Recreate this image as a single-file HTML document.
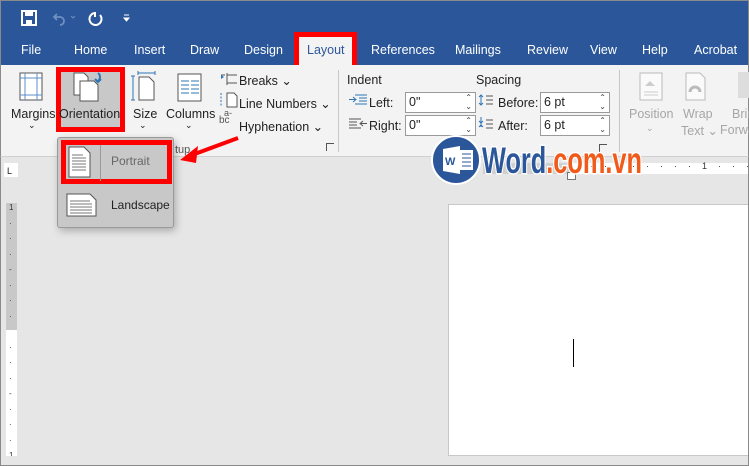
<!DOCTYPE html>
<html><head><meta charset="utf-8"><style>
*{margin:0;padding:0;box-sizing:border-box}
body{width:749px;height:466px;overflow:hidden;position:relative;background:#e6e6e6;font-family:"Liberation Sans",sans-serif;font-size:12px;color:#222}
.a{position:absolute}
.tab{position:absolute;top:43px;color:#fff;font-size:12.5px}
.rb{position:absolute;font-size:12.5px;color:#222}
.gr{color:#a6a6a6}
.inp{position:absolute;width:70px;height:21px;border:1px solid #9a9a9a;background:#fff;font-size:12.5px;padding:2px 3px}
.inp span{position:absolute;right:3px;top:0;font-size:8px;line-height:9px;color:#444}
</style></head><body>
<div class="a" style="left:0;top:0;width:749px;height:65px;background:#2b579a;border:1px solid #8a8a8a;border-bottom:none"></div>
<!-- QAT -->
<svg class="a" style="left:20px;top:9px" width="120" height="18">
<rect x="2" y="2" width="14" height="14" fill="none" stroke="#fff" stroke-width="2"/><rect x="5" y="2" width="8" height="5" fill="#fff"/><rect x="6" y="11" width="6" height="5" fill="#fff"/>
<path d="M37 5 l-3 3 3 3 M34 8 h6 a4 4 0 0 1 0 8" fill="none" stroke="#6f8fc0" stroke-width="1.8"/>
<path d="M51 7 l2 2 2-2" fill="none" stroke="#6f8fc0"/>
<path d="M75 4 a6 6 0 1 0 5 2 M75 3 v5" fill="none" stroke="#fff" stroke-width="2"/>
<path d="M104 6h5 M104 9 l2.5 3 2.5-3z" stroke="#fff" fill="#fff"/>
</svg>
<div class="tab" style="left:21px">File</div>
<div class="tab" style="left:74px">Home</div>
<div class="tab" style="left:134px">Insert</div>
<div class="tab" style="left:190px">Draw</div>
<div class="tab" style="left:244px">Design</div>
<div class="a" style="left:294px;top:32px;width:63px;height:33px;border:5px solid #f00;border-bottom:none;background:#f3f3f3"></div>
<div class="tab" style="left:307px;color:#2b579a">Layout</div>
<div class="tab" style="left:371px">References</div>
<div class="tab" style="left:455px">Mailings</div>
<div class="tab" style="left:527px">Review</div>
<div class="tab" style="left:590px">View</div>
<div class="tab" style="left:642px">Help</div>
<div class="tab" style="left:694px">Acrobat</div>
<!-- ribbon -->
<div class="a" style="left:0;top:65px;width:749px;height:92px;background:#f3f3f3;border-left:1px solid #8a8a8a;border-right:1px solid #8a8a8a;border-bottom:1px solid #d0d0d0"></div>
<div class="a" style="left:338px;top:70px;width:1px;height:82px;background:#c8c8c8"></div>
<div class="a" style="left:619px;top:70px;width:1px;height:82px;background:#c8c8c8"></div>
<svg class="a" style="left:18px;top:72px" width="90" height="30">
<rect x="2" y="1" width="22" height="27" fill="#fff" stroke="#555"/><path d="M7 1v27M19 1v27M2 6h22M2 23h22" stroke="#5b8fc9"/>
</svg>
<div class="a" style="left:56px;top:67px;width:69px;height:65px;background:#c8c8c8;border:5px solid #f00"></div>
<svg class="a" style="left:72px;top:71px" width="36" height="32">
<path d="M2 2h10l4 4v18H2z" fill="#fff" stroke="#555"/><path d="M8 10h14l4 4v16H8z" fill="#fff" stroke="#555"/>
<path d="M26 2 a5 5 0 0 1 0 8 M23 8l3 3 3-3" fill="none" stroke="#2e75b6" stroke-width="2"/>
</svg>
<svg class="a" style="left:130px;top:71px" width="30" height="32">
<path d="M3 5v24M1 5h4M1 29h4" stroke="#2e75b6"/><path d="M8 2h17M8 0v4M25 0v4" stroke="#2e75b6"/><path d="M9 6h10l5 5v18H9z" fill="#fff" stroke="#555"/>
</svg>
<svg class="a" style="left:177px;top:73px" width="26" height="30">
<rect x="1" y="1" width="23" height="27" fill="#fff" stroke="#555"/><path d="M4 8h8M14 8h8M4 12h8M14 12h8M4 16h8M14 16h8M4 20h8M14 20h8" stroke="#2e75b6"/>
</svg>
<div class="rb" style="left:11px;top:107px">Margins</div>
<div class="rb" style="left:59px;top:107px">Orientation</div>
<div class="rb" style="left:133px;top:107px">Size</div>
<div class="rb" style="left:166px;top:107px">Columns</div>
<div class="rb" style="left:28px;top:120px;font-size:9px">⌄</div>
<div class="rb" style="left:139px;top:120px;font-size:9px">⌄</div>
<div class="rb" style="left:185px;top:120px;font-size:9px">⌄</div>
<svg class="a" style="left:219px;top:71px" width="20" height="62">
<path d="M2 4h4M8 4h10M8 2v6M8 12h10M8 14v-6" stroke="#555" fill="none"/><path d="M2 4l3 2-3 2" fill="#2e75b6"/>
<path d="M8 22h7l3 3v11H8z" fill="#fff" stroke="#555"/><path d="M2 22v14" stroke="#2e75b6" stroke-dasharray="2 1.5"/>
<text x="0" y="52" font-size="10" fill="#555" font-family="Liberation Sans">bc</text><text x="5" y="45" font-size="9" fill="#555" font-family="Liberation Sans">a-</text>
</svg>
<div class="rb" style="left:239px;top:73px">Breaks ⌄</div>
<div class="rb" style="left:239px;top:96px">Line Numbers ⌄</div>
<div class="rb" style="left:239px;top:119px">Hyphenation ⌄</div>
<div class="rb" style="left:175px;top:144px;font-size:11px;color:#555">tup</div>
<div class="a" style="left:326px;top:143px;width:8px;height:8px;border-left:1px solid #555;border-top:1px solid #555"></div>
<div class="rb" style="left:347px;top:73px">Indent</div>
<div class="rb" style="left:476px;top:73px">Spacing</div>
<svg class="a" style="left:349px;top:93px" width="20" height="44"><path d="M6 2h12M10 5h8M10 8h8M6 11h12M0 6.5h6M4 4l3 2.5-3 2.5" stroke="#2e75b6" fill="none"/><path d="M0 26h12M0 29h8M0 32h8M0 35h12M12 30.5h6M14 28l-3 2.5 3 2.5" stroke="#555" fill="none"/></svg>
<div class="rb" style="left:369px;top:96px">Left:</div>
<div class="rb" style="left:369px;top:119px">Right:</div>
<div class="inp" style="left:405px;top:92px;width:71px">0"<span>⌃<br>⌄</span></div>
<div class="inp" style="left:405px;top:115px;width:71px">0"<span>⌃<br>⌄</span></div>
<svg class="a" style="left:478px;top:93px" width="16" height="44"><path d="M3 2v10M1 4l2-2 2 2M3 12v-2M1 10l2 2 2-2" stroke="#2e75b6" fill="none"/><path d="M8 3h7M8 7h7M8 11h7M8 27h7M8 31h7M8 35h7" stroke="#555"/><path d="M3 24v10M1 28l2 2 2-2M1 34l2-2 2 2" stroke="#2e75b6" fill="none"/></svg>
<div class="rb" style="left:498px;top:96px">Before:</div>
<div class="rb" style="left:498px;top:119px">After:</div>
<div class="inp" style="left:540px;top:92px">6 pt<span>⌃<br>⌄</span></div>
<div class="inp" style="left:540px;top:115px">6 pt<span>⌃<br>⌄</span></div>
<svg class="a" style="left:638px;top:72px" width="111" height="30"><rect x="2" y="1" width="22" height="27" fill="#fafafa" stroke="#bbb"/><path d="M7 14l5-5 5 5z" fill="#ccc"/><path d="M6 20h14M6 23h14" stroke="#ccc"/>
<path d="M48 1h14l5 5v22H48z" fill="#fafafa" stroke="#bbb"/><path d="M52 20a5 5 0 0 1 10 0" stroke="#bbb" fill="none" stroke-width="3"/><rect x="100" y="0" width="11" height="26" fill="#ddd"/></svg>
<div class="rb gr" style="left:629px;top:107px">Position</div>
<div class="rb gr" style="left:683px;top:107px">Wrap</div>
<div class="rb gr" style="left:681px;top:123px">Text ⌄</div>
<div class="rb gr" style="left:732px;top:107px">Brin</div>
<div class="rb gr" style="left:720px;top:123px">Forwa</div>
<div class="rb gr" style="left:646px;top:123px;font-size:9px">⌄</div>
<div class="a" style="left:599px;top:144px;width:8px;height:8px;border-left:1px solid #555;border-top:1px solid #555"></div>
<!-- rulers -->
<div class="a" style="left:4px;top:163px;width:14px;height:14px;background:#fff;font-size:9px;padding:3px">L</div>
<div class="a" style="left:483px;top:163px;width:90px;height:11px;background:#d0d0d0"></div>
<div class="a" style="left:573px;top:163px;width:176px;height:11px;background:#fff"></div>
<div class="a" style="left:590px;top:161px;font-size:9px;letter-spacing:11px;color:#333">········1···</div>
<div class="a" style="left:567px;top:172px;width:9px;height:8px;border:1px solid #777;background:#fff"></div>
<div class="a" style="left:6px;top:203px;width:11px;height:127px;background:#c8c8c8"></div>
<div class="a" style="left:6px;top:330px;width:11px;height:136px;background:#fff"></div>
<div class="a" style="left:9px;top:200px;font-size:8px;line-height:15.5px;color:#333;width:6px">1<br>·<br>·<br>·<br>-<br>·<br>·<br>·<br>&nbsp;<br>·<br>·<br>·<br>-<br>·<br>·<br>·<br>1</div>
<div class="a" style="left:448px;top:204px;width:301px;height:252px;background:#fff;border:1px solid #c8c8c8;border-right:none"></div>
<div class="a" style="left:573px;top:339px;width:1px;height:28px;background:#000"></div>
<div class="a" style="left:0;top:456px;width:749px;height:10px;background:#e6e6e6;border-bottom:1px solid #8a8a8a"></div>
<div class="a" style="left:0;top:157px;width:1px;height:309px;background:#8a8a8a"></div>
<div class="a" style="left:748px;top:157px;width:1px;height:309px;background:#8a8a8a"></div>
<!-- dropdown -->
<div class="a" style="left:57px;top:137px;width:117px;height:91px;background:#c8c8c8;border:1px solid #9a9a9a;border-radius:3px;box-shadow:2px 3px 8px rgba(0,0,0,.25)"></div>
<div class="a" style="left:61px;top:140px;width:111px;height:44px;border:5px solid #f00"></div>
<div class="a" style="left:100px;top:145px;width:1px;height:36px;background:#999"></div>
<svg class="a" style="left:68px;top:146px" width="24" height="32"><path d="M1 1h15l6 6v24H1z" fill="#fff" stroke="#555"/><path d="M4 9h11M4 12h14M4 15h14M4 18h14M4 21h14M4 24h14" stroke="#777"/></svg>
<div class="a" style="left:111px;top:154px;font-size:12px;color:#666">Portrait</div>
<svg class="a" style="left:66px;top:193px" width="32" height="24"><path d="M1 1h23l6 6v16H1z" fill="#fff" stroke="#555"/><path d="M4 8h20M4 11h22M4 14h22M4 17h22M4 20h22" stroke="#777"/></svg>
<div class="a" style="left:111px;top:198px;font-size:12px;color:#222">Landscape</div>
<!-- arrow -->
<svg class="a" style="left:170px;top:130px" width="80" height="40"><path d="M68 8 L22 25" stroke="#f00" stroke-width="4"/><path d="M10 30 L28 16 L26 33z" fill="#f00"/></svg>
<!-- logo -->
<svg class="a" style="left:430px;top:134px" width="220" height="54">
<circle cx="26" cy="26" r="24" fill="#2b579a" stroke="#fff" stroke-width="2"/>
<path d="M13 15 l17-3 v28 l-17-3z" fill="#fff"/><rect x="30" y="16" width="13" height="20" fill="#fff"/><path d="M32 20h9M32 24h9M32 28h9M32 32h9" stroke="#2b579a"/>
<text x="15" y="31" font-size="11" font-weight="bold" fill="#2b579a" font-family="Liberation Sans">W</text>
<text x="52" y="39" font-size="37" font-weight="bold" font-family="Liberation Sans Narrow, Liberation Sans" textLength="160" lengthAdjust="spacingAndGlyphs" stroke="#fff" stroke-width="3" paint-order="stroke"><tspan fill="#2b579a">Word</tspan><tspan fill="#f05a1a">.com.vn</tspan></text>
</svg>
</body></html>
